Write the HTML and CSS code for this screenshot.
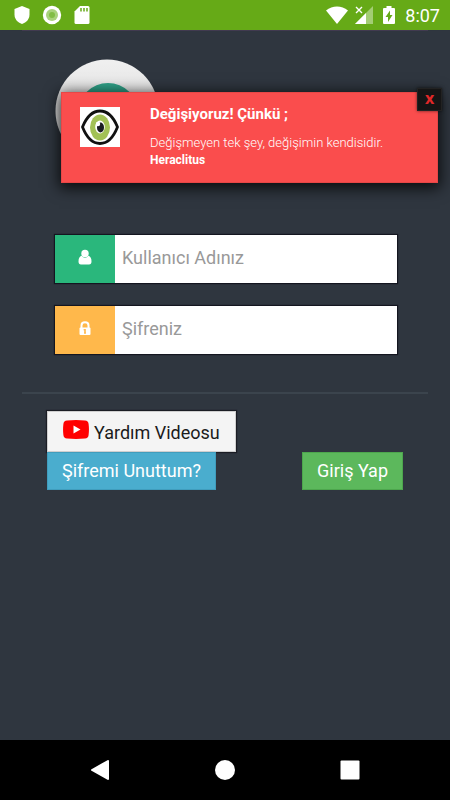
FILE: index.html
```
<!DOCTYPE html>
<html lang="tr">
<head>
    <meta charset="UTF-8">
    <meta name="viewport" content="width=device-width, initial-scale=1.0">
    <title>Giriş</title>
    <link rel="stylesheet" href="styles.css">
</head>
<body>
    <header class="status-bar">
        <svg class="status-icon" viewBox="0 0 20 20">
            <path fill="#fff" d="M10 1L17.500 4V9.500C17.500 14 14.500 17.500 10 19C5.500 17.500 2.500 14 2.500 9.500V4Z"/>
        </svg>
        <svg class="status-icon" viewBox="0 0 20 20">
            <circle cx="10" cy="10" r="9.200" fill="#fff"/>
            <circle cx="10" cy="10" r="6" fill="#a9d27c"/>
            <circle cx="10" cy="10" r="3" fill="#82bd45"/>
        </svg>
        <svg class="status-icon" viewBox="0 0 20 20">
            <path fill="#fff" d="M8 1H16Q17.500 1 17.500 2.500V17.500Q17.500 19 16 19H4Q2.500 19 2.500 17.500V6.500Z"/>
            <path stroke="#66aa17" stroke-width="1.500" d="M9 3V6.500M12 3V6.500M15 3V6.500"/>
        </svg>
        <div class="status-right">
            <svg class="status-icon wifi" viewBox="0 0 24 20">
                <path fill="#fff" d="M12 19L1 5.500Q6 1.500 12 1.500T23 5.500Z"/>
            </svg>
            <svg class="status-icon" viewBox="0 0 20 20">
                <path fill="#a3cd74" d="M19 1V19H1Z"/>
                <path fill="#fff" d="M12 8V19H1Z"/>
                <path stroke="#66aa17" stroke-width="4" d="M2 2L8 8M8 2L2 8"/>
                <path stroke="#fff" stroke-width="1.400" d="M2 2L8 8M8 2L2 8"/>
            </svg>
            <svg class="status-icon" viewBox="0 0 20 20">
                <path fill="#fff" d="M7.500 1H12.500V3H15Q16 3 16 4V18Q16 19 15 19H5Q4 19 4 18V4Q4 3 5 3H7.500Z"/>
                <path fill="#66aa17" d="M11 5.500V10H13.500L9 17V12H6.500Z"/>
            </svg>
            <span class="clock">8:07</span>
        </div>
    </header>

    <main class="page">
        <div class="logo-area">
            <svg class="logo" viewBox="0 0 104 104">
                <defs>
                    <linearGradient id="ring" x1="0" y1="0" x2="0" y2="1">
                        <stop offset="0" stop-color="#f0f0f0"/>
                        <stop offset="1" stop-color="#cfcfcf"/>
                    </linearGradient>
                </defs>
                <circle cx="52" cy="52" r="51.500" fill="url(#ring)"/>
                <circle cx="53" cy="54" r="30" fill="#2fa288"/>
            </svg>
        </div>

        <div class="alert" role="alert">
            <button type="button" class="alert-close" aria-label="Kapat">x</button>
            <svg class="alert-icon" viewBox="0 0 40 40">
                <rect width="40" height="40" fill="#fff"/>
                <path fill="#fff" stroke="#111" stroke-width="2.800" stroke-linejoin="round" d="M2.500 20Q9 4 20 4T37.500 20Q31 36.500 20 36.500T2.500 20Z"/>
                <ellipse cx="20" cy="20.500" rx="10" ry="13" fill="#a2c155"/>
                <ellipse cx="20" cy="20" rx="4.800" ry="6.500" fill="#fff"/>
                <ellipse cx="20.500" cy="20.500" rx="3.500" ry="5" fill="#1a1c22"/>
                <circle cx="18" cy="17" r="2.200" fill="#fff"/>
            </svg>
            <div class="alert-text">
                <h2>Değişiyoruz! Çünkü ;</h2>
                <p>Değişmeyen tek şey, değişimin kendisidir.<br><strong>Heraclitus</strong></p>
            </div>
        </div>

        <form class="login">
            <div class="fields">
                <div class="input-group">
                    <label class="addon addon-green" for="username" aria-label="Kullanıcı Adınız">
                        <svg class="addon-icon" viewBox="0 0 14 16">
                            <circle cx="7" cy="4.500" r="3.700" fill="#fff"/>
                            <path fill="#fff" d="M3.500 6.800Q7 10.500 10.500 6.800Q13.500 7.800 13.500 12.500Q13.500 15.500 11 15.500H3Q0.500 15.500 0.500 12.500Q0.500 7.800 3.500 6.800Z"/>
                        </svg>
                    </label>
                    <input type="text" id="username" placeholder="Kullanıcı Adınız">
                </div>
                <div class="input-group">
                    <label class="addon addon-orange" for="password" aria-label="Şifreniz">
                        <svg class="addon-icon" viewBox="0 0 14 16">
                            <path fill="none" stroke="#fff" stroke-width="2" d="M3.500 8V5.500Q3.500 2.300 7 2.300T10.500 5.500V8"/>
                            <rect x="1.500" y="7.500" width="11" height="7.500" rx="1" fill="#fff"/>
                            <path stroke="#ffb84b" stroke-width="1.600" d="M7 9V13.500"/>
                            <path stroke="#ffb84b" d="M5.500 9.800H7M6 13H8"/>
                        </svg>
                    </label>
                    <input type="password" id="password" placeholder="Şifreniz">
                </div>
            </div>

            <div class="actions">
                <div class="help">
                    <a href="#" class="btn btn-video">
                        <svg class="youtube" viewBox="0 0 26 19">
                            <path fill="#f00" d="M4 0.500Q13 -0.300 22 0.500Q25.300 0.800 25.600 4Q26.300 9.500 25.600 15Q25.300 18.200 22 18.500Q13 19.300 4 18.500Q0.700 18.200 0.400 15Q-0.300 9.500 0.400 4Q0.700 0.800 4 0.500Z"/>
                            <path fill="#fff" d="M10.500 5.500L17.500 9.500L10.500 13.500Z"/>
                        </svg>
                        Yardım Videosu
                    </a>
                    <a href="#" class="btn btn-info">Şifremi Unuttum?</a>
                </div>
                <button type="submit" class="btn btn-success">Giriş Yap</button>
            </div>
        </form>
    </main>

    <nav class="nav-bar">
        <button type="button" aria-label="Geri">
            <svg viewBox="0 0 20 20"><path fill="#fff" stroke="#fff" stroke-width="2" stroke-linejoin="round" d="M2 10L18 1V19Z"/></svg>
        </button>
        <button type="button" aria-label="Ana ekran">
            <svg viewBox="0 0 20 20"><circle cx="10" cy="10" r="10" fill="#fff"/></svg>
        </button>
        <button type="button" aria-label="Son uygulamalar">
            <svg viewBox="0 0 20 20"><rect width="19" height="19" x="0.500" y="0.500" rx="1" fill="#fff"/></svg>
        </button>
    </nav>
</body>
</html>
```
FILE: styles.css
```
* {
    box-sizing: border-box;
}
body {
    margin: 0;
    min-height: 100vh;
    display: flex;
    flex-direction: column;
    background-color: #2f363f;
    font-family: Roboto, "Liberation Sans", sans-serif;
    font-size: 18px;
}
svg {
    display: block;
}

/* status bar */
.status-bar {
    display: flex;
    align-items: center;
    gap: 10px;
    height: 30px;
    padding: 0 10px 0 12px;
    background-color: #66aa17;
    color: #fff;
}
.status-icon {
    width: 20px;
    height: 20px;
}
.wifi {
    width: 24px;
}
.status-right {
    display: flex;
    align-items: center;
    gap: 5px;
    margin-left: auto;
}
.clock {
    margin-left: 1px;
    font-size: 18px;
}

/* page */
.page {
    position: relative;
    flex: 1;
    padding: 0 22px;
}
.logo-area {
    height: 205px;
    padding: 28px 33px;
    border-top: 1px solid #413a50;
}
.logo {
    width: 104px;
    height: 104px;
}

/* alert */
.alert {
    position: absolute;
    top: 62px;
    left: 61px;
    right: 12px;
    display: flex;
    gap: 30px;
    height: 91px;
    padding: 14px 18px;
    background-color: #fa4d4d;
    border: 1px solid #e84646;
    color: #fff;
    box-shadow: 0 3px 14px 2px rgba(0, 0, 0, 0.8);
}
.alert-close {
    position: absolute;
    top: -5px;
    right: -5px;
    width: 25px;
    height: 23px;
    padding: 0 0 4px;
    border: 1px solid #222;
    background-color: #151515;
    color: #e02828;
    font: bold 16px/18px "Open Sans", sans-serif;
    box-shadow: 0 0 3px rgba(0, 0, 0, 0.6);
}
.alert-icon {
    width: 40px;
    height: 40px;
}
.alert-text h2 {
    margin: 0 0 12px;
    font-size: 15px;
    line-height: 15px;
}
.alert-text p {
    margin: 0;
    font-size: 13px;
    font-weight: 350;
    line-height: 17px;
}
.alert-text strong {
    font-size: 12px;
    font-weight: bold;
}

/* login form */
.fields {
    display: grid;
    gap: 23px;
    padding: 0 31px 38px 33px;
    border-bottom: 2px solid #3b444d;
}
.input-group {
    display: flex;
    height: 48px;
    box-shadow: 0 0 1px 1px #141620;
}
.addon {
    display: flex;
    justify-content: center;
    width: 60px;
    padding-top: 14px;
}
.addon-green {
    background-color: #2ab77c;
}
.addon-orange {
    background-color: #ffb84b;
}
.addon-icon {
    width: 14px;
    height: 16px;
}
.input-group input {
    flex: 1;
    min-width: 0;
    padding: 0 7px 3px;
    border: 0;
    background-color: #fff;
    font-family: inherit;
    font-size: 18px;
}
.input-group input::placeholder {
    color: #999;
}

/* buttons */
.actions {
    display: flex;
    justify-content: space-between;
    align-items: flex-end;
    padding: 17px 25px;
}
.help {
    display: flex;
    flex-direction: column;
    align-items: flex-start;
}
.btn {
    display: flex;
    align-items: center;
    height: 38px;
    padding: 0 14px 2px;
    border: 1px solid;
    color: #fff;
    font-family: inherit;
    font-size: 18px;
    text-decoration: none;
    white-space: nowrap;
}
.btn-video {
    gap: 5px;
    height: 41px;
    padding: 2px 15px 0;
    border-color: #cfcfcf;
    background-color: #f4f4f4;
    color: #1b1b1b;
    box-shadow: 0 0 1px 1px #1b1d24;
}
.youtube {
    width: 26px;
    height: 19px;
    margin-bottom: 6px;
}
.btn-info {
    border-color: #409dbd;
    background-color: #4aadce;
}
.btn-success {
    border-color: #4da64d;
    background-color: #5cb85c;
}

/* bottom navigation */
.nav-bar {
    display: flex;
    justify-content: center;
    align-items: center;
    gap: 105px;
    height: 60px;
    background-color: #000;
}
.nav-bar button {
    padding: 0;
    border: 0;
    background: none;
}
.nav-bar svg {
    width: 20px;
    height: 20px;
}
```
